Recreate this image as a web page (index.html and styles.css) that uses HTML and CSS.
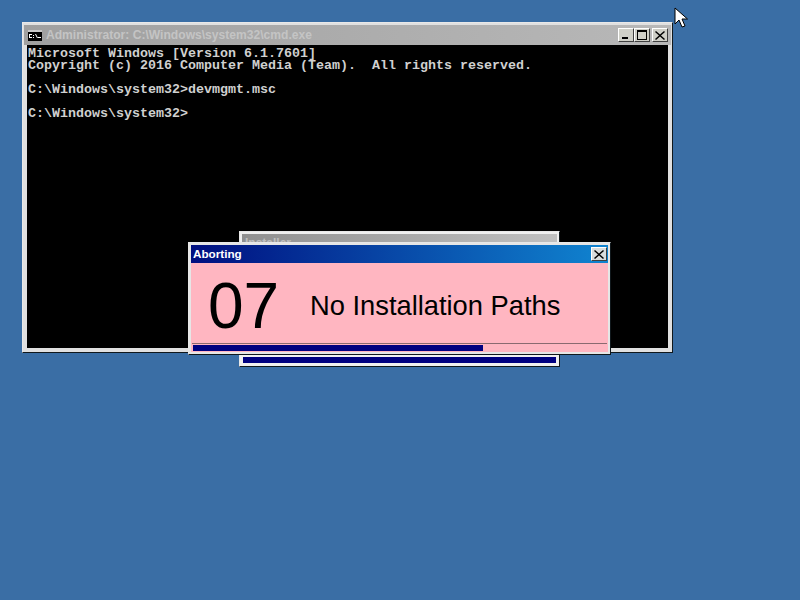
FILE: index.html
```html
<!DOCTYPE html>
<html lang="en">
<head>
<meta charset="utf-8">
<title>Aborting</title>
<link rel="stylesheet" href="styles.css">
</head>
<body>
<main class="desktop">
  <section class="window cmd">
    <header class="titlebar cmd-title">
      <svg class="cmd-icon" width="14" height="11" viewBox="0 0 14 11"><rect width="14" height="11" fill="#000"/><rect y="0" width="14" height="2" fill="#c8c8c8"/><rect x="1" y="4" width="3" height="4" fill="#fff"/><rect x="2" y="5" width="2" height="2" fill="#000"/><rect x="5" y="5" width="1" height="1" fill="#fff"/><rect x="5" y="7" width="1" height="1" fill="#fff"/><path d="M7 4h1l2 4H9z" fill="#fff"/><rect x="10" y="7" width="3" height="1" fill="#fff"/></svg>
      <span class="title-text">Administrator: C:\Windows\system32\cmd.exe</span>
      <div class="controls">
        <button class="ctl"><svg width="12" height="10" viewBox="0 0 12 10"><rect x="2" y="7" width="6" height="2" fill="#000"/></svg></button>
        <button class="ctl"><svg width="12" height="10" viewBox="0 0 12 10"><path d="M1 0h10v10H1zM2 2v7h8V2z" fill="#000" fill-rule="evenodd"/></svg></button>
        <button class="ctl ctl-close"><svg width="10" height="9" viewBox="0 0 10 9"><path d="M1 0l4 3.5L9 0l1 1-4 3.500L10 8 9 9 5 5.500 1 9 0 8l4-3.500L0 1z" fill="#000"/></svg></button>
      </div>
    </header>
    <pre class="console">Microsoft Windows [Version 6.1.7601]
Copyright (c) 2016 Computer Media (Team).  All rights reserved.

C:\Windows\system32&gt;devmgmt.msc

C:\Windows\system32&gt;</pre>
  </section>

  <section class="window installer">
    <header class="titlebar installer-title"><span class="installer-text">Installer</span></header>
    <div class="installer-body"><div class="installer-bar"></div></div>
  </section>

  <section class="window dialog">
    <header class="titlebar dialog-title">
      <span class="dialog-text">Aborting</span>
      <button class="ctl ctl-dialog"><svg width="10" height="9" viewBox="0 0 10 9"><path d="M1 0l4 3.500L9 0l1 1-4 3.500L10 8 9 9 5 5.500 1 9 0 8l4-3.500L0 1z" fill="#000"/></svg></button>
    </header>
    <div class="dialog-body">
      <div class="message">
        <span class="code">07</span>
        <span class="reason">No Installation Paths</span>
      </div>
      <div class="progress"><div class="progress-fill" style="width:70.1%"></div></div>
    </div>
  </section>

  <svg class="cursor" width="14" height="22" viewBox="0 0 14 22"><path d="M1 1v16l4-4 3 7 3-1-3-7h5.500z" fill="#fff" stroke="#000" stroke-width="1"/></svg>
</main>
</body>
</html>
```
FILE: styles.css
```css
html, body { margin: 0; padding: 0; }
body { width: 800px; height: 600px; overflow: hidden; background: #3a6ea5; font-family: "Liberation Sans", Arial, sans-serif; }
.desktop { position: relative; width: 800px; height: 600px; }
.window {
  position: absolute;
  box-sizing: border-box;
  display: flex;
  flex-direction: column;
  background: #d4d0c8;
  border: 1px solid;
  border-color: #e8e8e8 #10181c #10181c #e8e8e8;
}
.titlebar { display: flex; align-items: center; box-sizing: border-box; }
.cmd { left: 22px; top: 22px; width: 651px; height: 331px; padding: 2px 4px 4px 4px; background: #e0e0e0; }
.cmd-title { height: 20px; margin: 0 -3px; padding: 0 3px 0 4px; background: linear-gradient(to right, #a0a0a0, #b8b8b8); flex: none; }
.cmd-icon { flex: none; }
.title-text { margin-left: 4px; font: bold 12.100px/20px "Liberation Sans", Arial, sans-serif; color: #c4c4c4; }
.controls { display: flex; margin-left: auto; gap: 0; }
.ctl {
  box-sizing: border-box;
  display: flex; align-items: center; justify-content: center;
  width: 16px; height: 14px; padding: 0;
  background: #d0d0c8;
  border: 1px solid; border-color: #fff #404040 #404040 #fff;
}
.ctl-close { margin-left: 2px; }
.console {
  flex: 1; margin: 0; padding: 3px 0 0 1px;
  background: #000; color: #d0d0d0;
  font: bold 13.33px/12px "Liberation Mono", "Courier New", monospace;
  overflow: hidden;
}
.installer { left: 239px; top: 231px; width: 321px; height: 136px; padding: 2px 3px 1px; background: #f0f0f0; }
.installer-title { height: 18px; margin: 0 -1px; background: linear-gradient(to right, #909090, #c0c0c0); flex: none; }
.installer-text { margin-left: 3px; font: bold 12px/18px "Liberation Sans", Arial, sans-serif; color: #c0c0c0; }
.installer-body { flex: 1; display: flex; align-items: flex-end; padding-bottom: 2px; }
.installer-bar { flex: 1; height: 6px; background: #000080; }
.dialog { left: 188px; top: 242px; width: 423px; height: 113px; padding: 2px; background: #e6e6e6; }
.dialog-title {
  height: 18px; padding: 0 1px 0 2px; flex: none;
  background: linear-gradient(to right, #000f80, #1084d0);
  justify-content: space-between;
}
.dialog-text { font: bold 11.700px/18px "Liberation Sans", Arial, sans-serif; color: #fff; }
.ctl-dialog { background: #d8dcdc; }
.dialog-body { flex: 1; background: #ffb6c1; display: flex; flex-direction: column; }
.message { flex: 1; display: flex; align-items: center; padding: 5px 0 0 17px; }
.code { font-size: 64px; line-height: 1; color: #000; width: 102px; flex: none; }
.reason { font-size: 27.300px; color: #000; }
.progress { height: 7px; margin: 0 1px; border-top: 1px solid #8a6a70; padding: 1px 0 0 1px; box-sizing: content-box; }
.progress-fill { height: 6px; background: #000080; }
.cursor { position: absolute; left: 674px; top: 7px; }
```
